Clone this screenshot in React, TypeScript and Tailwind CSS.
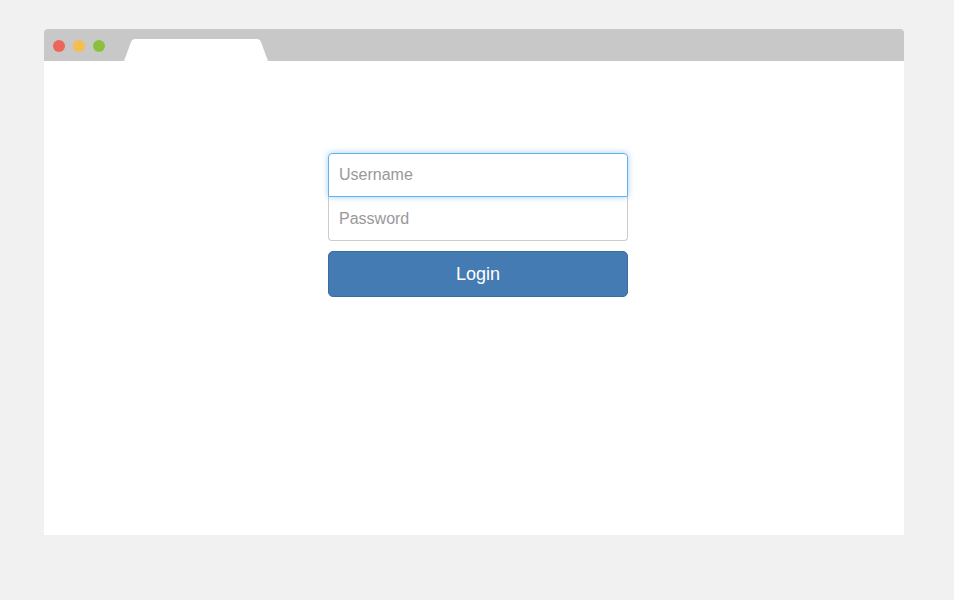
export default function App() {
  return (
    <div className="min-h-[600px] w-full bg-[#f1f1f1] pt-[29px] pl-[44px] font-['Liberation_Sans',Arial,sans-serif]">
      <div className="w-[860px] h-[506px] bg-white rounded-t-[4px] overflow-hidden flex flex-col">
        <div className="h-[32px] bg-[#c8c8c8] flex items-center pl-[9px] pt-px">
          <div className="flex gap-[8px]">
            <span className="w-[12px] h-[12px] rounded-full bg-[#ef6459]" />
            <span className="w-[12px] h-[12px] rounded-full bg-[#f4bf4f]" />
            <span className="w-[12px] h-[12px] rounded-full bg-[#8dbf3e]" />
          </div>
          <svg width="144" height="22" viewBox="0 0 144 22" className="self-end ml-[19px]">
            <path d="M0 22 L7 3 Q8 0 11 0 L133 0 Q136 0 137 3 L144 22 Z" fill="#ffffff" />
          </svg>
        </div>
        <div className="flex-1 flex flex-col items-center pt-[92px] pl-[8px]">
          <div className="w-[300px] flex flex-col">
            <input
              placeholder="Username"
              className="h-[44px] px-[10px] text-[16px] text-[#555] placeholder:text-[#999] border border-[#66afe9] rounded-t-[4px] shadow-[0_0_6px_rgba(102,175,233,0.6)] outline-none relative z-10"
            />
            <input
              placeholder="Password"
              type="password"
              className="h-[44px] px-[10px] text-[16px] text-[#555] placeholder:text-[#999] border border-[#ccc] border-t-0 rounded-b-[4px] outline-none"
            />
            <button className="mt-[10px] h-[46px] rounded-[5px] bg-[#457bb3] border border-[#3a6ca0] text-white text-[18px]">
              Login
            </button>
          </div>
        </div>
      </div>
    </div>
  );
}
